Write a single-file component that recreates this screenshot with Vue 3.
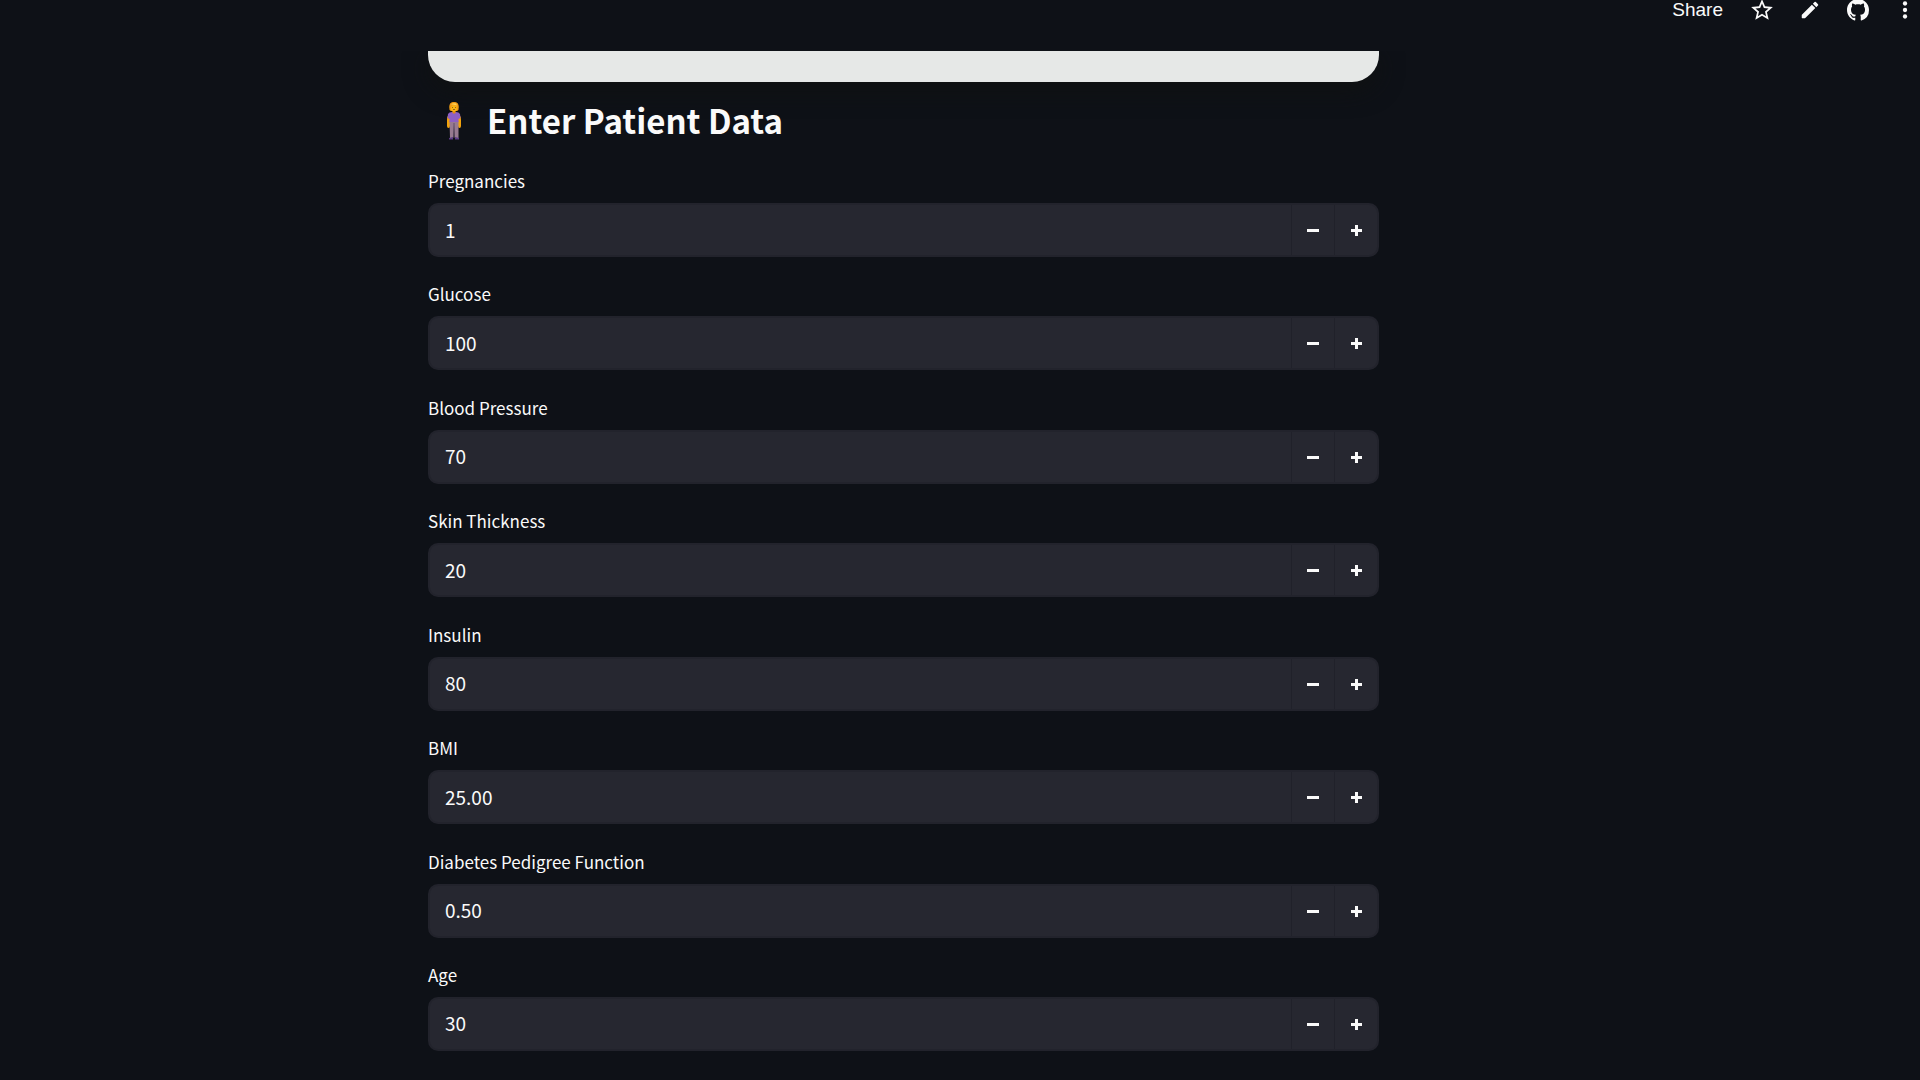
<script setup>
import { reactive } from 'vue'

const fields = reactive([
  { id: 'pregnancies', label: 'Pregnancies', value: '1', step: 1, digits: 0 },
  { id: 'glucose', label: 'Glucose', value: '100', step: 1, digits: 0 },
  { id: 'blood-pressure', label: 'Blood Pressure', value: '70', step: 1, digits: 0 },
  { id: 'skin-thickness', label: 'Skin Thickness', value: '20', step: 1, digits: 0 },
  { id: 'insulin', label: 'Insulin', value: '80', step: 1, digits: 0 },
  { id: 'bmi', label: 'BMI', value: '25.00', step: 0.01, digits: 2 },
  { id: 'pedigree', label: 'Diabetes Pedigree Function', value: '0.50', step: 0.01, digits: 2 },
  { id: 'age', label: 'Age', value: '30', step: 1, digits: 0 }
])

function change(field, direction) {
  const next = Math.max(0, Number(field.value) + direction * field.step)
  field.value = next.toFixed(field.digits)
}
</script>

<template>
  <div class="page">
    <header class="toolbar">
      <button type="button" class="share">Share</button>
      <button type="button" class="tool" aria-label="Favorite">
        <svg viewBox="0 0 24 24" width="26" height="26"><path d="M22 9.24l-7.19-.62L12 2 9.19 8.63 2 9.24l5.46 4.73L5.82 21 12 17.27 18.18 21l-1.63-7.03L22 9.24zM12 15.4l-3.76 2.27 1-4.28-3.32-2.88 4.38-.38L12 6.1l1.71 4.04 4.38.38-3.32 2.88 1 4.28L12 15.4z" /></svg>
      </button>
      <button type="button" class="tool" aria-label="Edit">
        <svg viewBox="0 0 24 24" width="22" height="22"><path d="M3 17.46v3.04c0 .28.22.5.5.5h3.04c.13 0 .26-.05.35-.15L17.81 9.94l-3.75-3.75L3.15 17.1c-.1.1-.15.22-.15.36zM20.71 7.04a1 1 0 0 0 0-1.41l-2.34-2.34a1 1 0 0 0-1.41 0l-1.83 1.83 3.75 3.75 1.83-1.83z" /></svg>
      </button>
      <button type="button" class="tool" aria-label="View source">
        <svg viewBox="0 0 16 16" width="22" height="22"><path d="M8 0C3.58 0 0 3.58 0 8c0 3.54 2.29 6.53 5.47 7.59.4.07.55-.17.55-.38 0-.19-.01-.82-.01-1.49-2.01.37-2.53-.49-2.69-.94-.09-.23-.48-.94-.82-1.13-.28-.15-.68-.52-.01-.53.63-.01 1.08.58 1.23.82.72 1.21 1.87.87 2.33.66.07-.52.28-.87.51-1.07-1.78-.2-3.64-.89-3.64-3.95 0-.87.31-1.59.82-2.15-.08-.2-.36-1.02.08-2.12 0 0 .67-.21 2.2.82.64-.18 1.32-.27 2-.27s1.36.09 2 .27c1.53-1.04 2.2-.82 2.2-.82.44 1.1.16 1.92.08 2.12.51.56.82 1.27.82 2.15 0 3.07-1.87 3.75-3.65 3.95.29.25.54.73.54 1.48 0 1.07-.01 1.93-.01 2.2 0 .21.15.46.55.38A8.01 8.01 0 0 0 16 8c0-4.42-3.58-8-8-8z" /></svg>
      </button>
      <button type="button" class="tool" aria-label="More options">
        <svg viewBox="0 0 24 24" width="26" height="26"><circle cx="12" cy="6" r="2" /><circle cx="12" cy="12" r="2" /><circle cx="12" cy="18" r="2" /></svg>
      </button>
    </header>

    <main class="content">
      <div class="column">
        <div class="card"></div>
        <h2 class="title">
          <svg class="person" viewBox="0 -2 14 40" width="14" height="40" aria-hidden="true">
            <path d="M2 12.500Q0 14 0 18v6q0 2 1.500 2T3 24l1-10zM12 12.500q2 1.500 2 5.500v6q0 2-1.500 2T11 24l-1-10z" fill="#f2a20c" />
            <path d="M2.500 19h9v17H7.700L7 23l-.7 13H3z" fill="#977a91" />
            <path d="M6.500 21h1v14h-1z" fill="#624c68" />
            <path d="M2 37.500V36l4-1v2.500zM8 37.500V35l4 1v1.500z" fill="#5b3b86" />
            <path d="M1 12q1-2 4-2h4q3 0 4 2l.500 4-2 1v3h-9v-3l-2-1z" fill="#8d5fc4" />
            <path d="M5.500 8h3v3Q7 12 5.500 11z" fill="#e58c0b" />
            <ellipse cx="7" cy="5" rx="4.500" ry="4.500" fill="#fbb512" />
            <path d="M2.500 5Q2 0 7 0t4.500 5v3L10 9 9.500 4 6 3 4 5v4L2.500 8z" fill="#f49a14" />
            <path d="M4 2.500Q6 .500 9 1.500l1 2-4-1z" fill="#ffd45b" />
            <path d="M5 5h1v1H5zM8 5h1v1H8zM6 7h2v1H6z" fill="#97611d" />
          </svg>
          <span>Enter Patient Data</span>
        </h2>

        <form class="fields" @submit.prevent>
          <div v-for="field in fields" :key="field.id" class="field">
            <label :for="field.id">{{ field.label }}</label>
            <div class="control">
              <input :id="field.id" v-model="field.value" type="text" inputmode="decimal" autocomplete="off" />
              <button type="button" :aria-label="'Decrease ' + field.label" @click="change(field, -1)">
                <svg viewBox="0 0 12 12" width="12" height="12"><path d="M0 5h12v3H0z" /></svg>
              </button>
              <button type="button" :aria-label="'Increase ' + field.label" @click="change(field, 1)">
                <svg viewBox="0 0 12 12" width="12" height="12"><path d="M5 1h3v4h4v3H8v4H5V8H1V5h4z" /></svg>
              </button>
            </div>
          </div>
        </form>
      </div>
    </main>
  </div>
</template>

<style>
body {
  background: #0e1117;
}
</style>

<style scoped>
.page {
  box-sizing: border-box;
  min-height: 100vh;
  display: flex;
  flex-direction: column;
  overflow: hidden;
  background: #0e1117;
  color: #fafafa;
  font-family: "Noto Sans CJK SC", "Noto Sans", sans-serif;
}

button {
  padding: 0;
  border: 0;
  background: none;
  color: inherit;
  cursor: pointer;
}

svg {
  display: block;
  flex: none;
  fill: currentColor;
}

.toolbar {
  box-sizing: border-box;
  height: 51px;
  padding-bottom: 32px;
  display: flex;
  align-items: center;
  justify-content: flex-end;
}

.share {
  margin-right: 15px;
  font: 19px/24px "Liberation Sans", Arial, sans-serif;
}

.tool {
  width: 48px;
  height: 26px;
  display: flex;
  align-items: center;
  justify-content: center;
  flex: none;
}

.tool:last-child {
  width: 46px;
  margin-right: -8px;
}

.content {
  flex: 1;
  display: flex;
  justify-content: center;
  padding: 0 113px 29px 0;
  overflow: hidden;
}

.column {
  width: 100%;
  max-width: 951px;
  display: flex;
  flex-direction: column;
}

.card {
  height: 31px;
  flex: none;
  border-radius: 0 0 27px 27px;
  background: #e6e8e7;
  box-shadow: 0 8px 24px rgba(16, 18, 16, 0.8);
}

.title {
  display: flex;
  align-items: center;
  gap: 26px;
  margin: 14px 0 25px;
  padding-left: 19px;
  font-size: 33px;
  line-height: 48px;
  font-weight: 700;
}

.fields {
  flex: 1;
  display: flex;
  flex-direction: column;
  justify-content: space-between;
}

.field label {
  display: block;
  width: max-content;
  margin-bottom: 10px;
  font-size: 17px;
  line-height: 24px;
}

.control {
  box-sizing: border-box;
  height: 54px;
  display: flex;
  border: 2px solid #22232c;
  border-radius: 10px;
  background: #262730;
  overflow: hidden;
}

.control input {
  flex: 1;
  min-width: 0;
  padding: 0 15px 2px;
  border: 0;
  outline: 0;
  background: transparent;
  color: inherit;
  font: inherit;
  font-size: 19px;
}

.control button {
  box-sizing: border-box;
  width: 43px;
  display: flex;
  align-items: center;
  justify-content: center;
  border-left: 1px solid #20212a;
}
</style>
